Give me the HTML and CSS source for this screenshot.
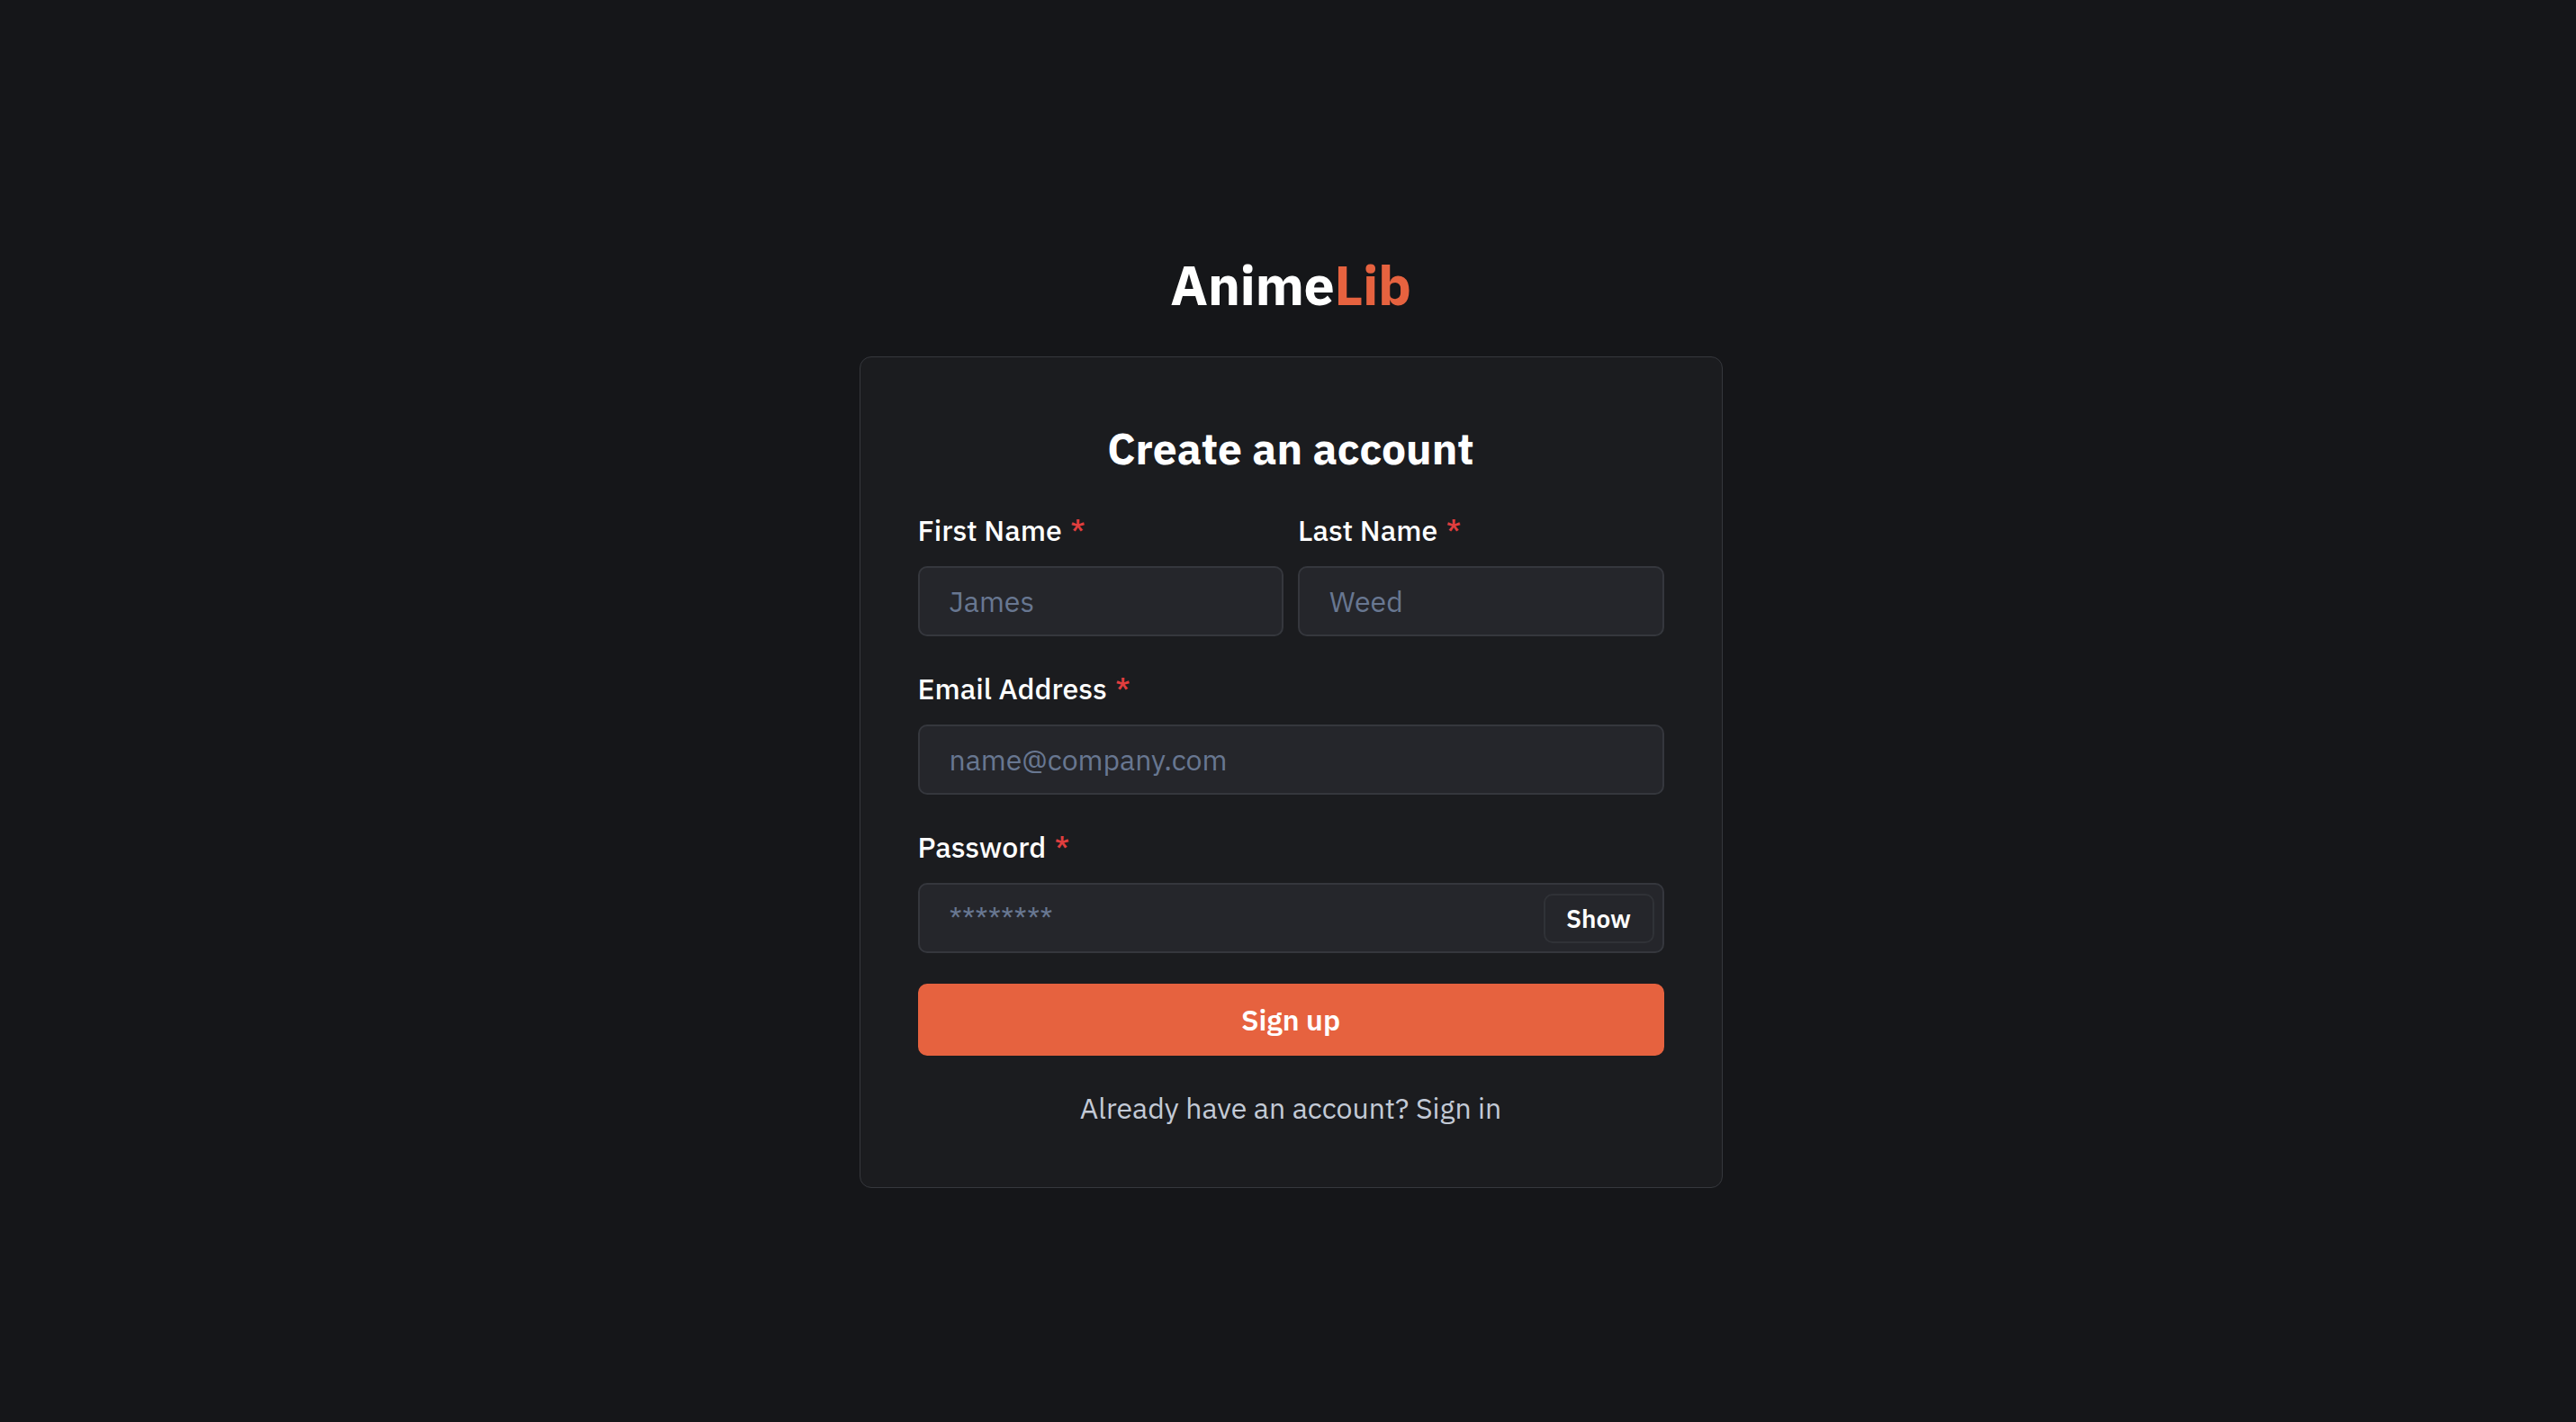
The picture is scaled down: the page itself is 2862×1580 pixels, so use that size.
FILE: index.html
```html
<!DOCTYPE html>
<html lang="en">
<head>
<meta charset="utf-8">
<title>AnimeLib – Create an account</title>
<link rel="stylesheet" href="styles.css">
</head>
<body>
<main class="page">
  <h1 class="logo">Anime<span class="logo-accent">Lib</span></h1>
  <section class="card">
    <h2 class="card-title">Create an account</h2>
    <form class="form">
      <div class="row">
        <div class="field">
          <label class="label" for="first">First Name <span class="req">*</span></label>
          <input class="input" id="first" type="text" placeholder="James">
        </div>
        <div class="field">
          <label class="label" for="last">Last Name <span class="req">*</span></label>
          <input class="input" id="last" type="text" placeholder="Weed">
        </div>
      </div>
      <div class="field">
        <label class="label" for="email">Email Address <span class="req">*</span></label>
        <input class="input" id="email" type="email" placeholder="name@company.com">
      </div>
      <div class="field">
        <label class="label" for="pw">Password <span class="req">*</span></label>
        <div class="pw-box">
          <input class="pw-input" id="pw" type="password" placeholder="********">
          <button class="show-btn" type="button">Show</button>
        </div>
      </div>
      <button class="submit" type="button">Sign up</button>
      <p class="alt">Already have an account? Sign in</p>
    </form>
  </section>
</main>
</body>
</html>
```

FILE: styles.css
```css
* { box-sizing: border-box; }

html, body {
  margin: 0;
  padding: 0;
  background: #151619;
}

body {
  font-family: "IBM Plex Sans", Roboto, "Liberation Sans", sans-serif;
  color: #ffffff;
}

.page {
  min-height: 100vh;
  display: flex;
  flex-direction: column;
  align-items: center;
  padding-top: 280px;
  padding-left: 6px;
}

.logo {
  margin: 0 0 44px;
  font-size: 61px;
  line-height: 72px;
  font-weight: 700;
  color: #ffffff;
  letter-spacing: -0.5px;
}

.logo-accent { color: #e6623f; }

.card {
  width: 959px;
  background: #1b1c1f;
  border: 1px solid #36383d;
  border-radius: 13px;
  padding: 69px 64px 64px;
}

.card-title {
  margin: 0 0 35px;
  text-align: center;
  font-size: 48px;
  line-height: 64px;
  font-weight: 700;
}

.form {
  display: flex;
  flex-direction: column;
  gap: 34px;
}

.row {
  display: grid;
  grid-template-columns: 1fr 1fr;
  gap: 16px;
}

.field {
  display: flex;
  flex-direction: column;
  gap: 16px;
}

.label {
  font-size: 32px;
  line-height: 48px;
  font-weight: 500;
  color: #ffffff;
}

.req {
  color: #e03e3e;
  margin-left: 2px;
}

.input,
.pw-box {
  height: 78px;
  background: #25262b;
  border: 2px solid #35373d;
  border-radius: 10px;
}

.input {
  width: 100%;
  padding: 0 33px;
  font-family: inherit;
  font-size: 32px;
  color: #ffffff;
  outline: none;
}

.input::placeholder,
.pw-input::placeholder {
  color: #687791;
  opacity: 1;
}

.pw-box {
  display: flex;
  align-items: center;
  padding: 0 9px 0 33px;
}

.pw-input {
  flex: 1;
  min-width: 0;
  height: 100%;
  border: 0;
  background: transparent;
  font-family: inherit;
  font-size: 32px;
  color: #ffffff;
  outline: none;
  padding: 0;
}

.show-btn {
  width: 123px;
  height: 55px;
  border: 2px solid #303237;
  border-radius: 10px;
  background: #25262b;
  color: #ffffff;
  font-family: inherit;
  font-size: 28px;
  font-weight: 600;
  padding: 0;
}

.submit {
  height: 80px;
  width: 100%;
  border: 0;
  border-radius: 10px;
  background: #e6623f;
  color: #ffffff;
  font-family: inherit;
  font-size: 32px;
  font-weight: 600;
}

.alt {
  margin: 0;
  text-align: center;
  font-size: 32px;
  line-height: 48px;
  color: #c3cad6;
}
```
